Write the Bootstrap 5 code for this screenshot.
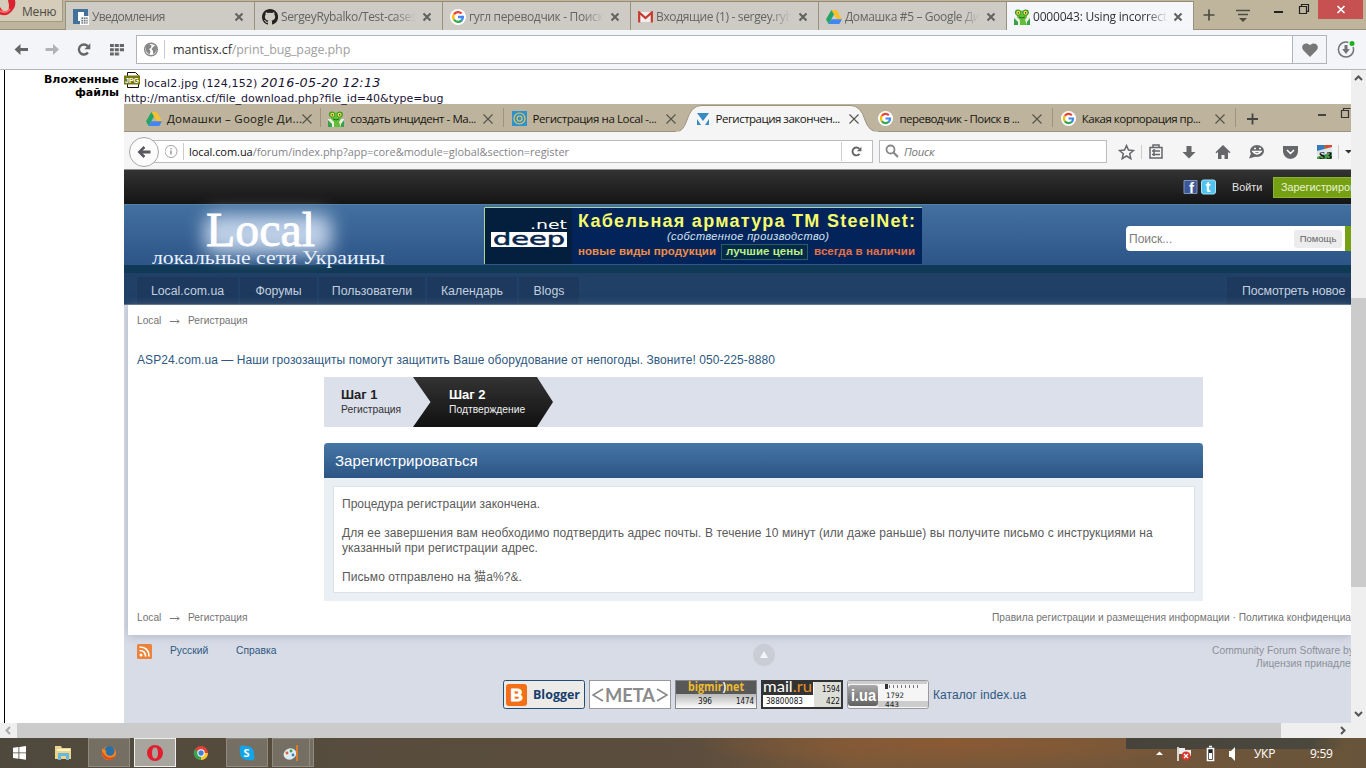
<!DOCTYPE html>
<html lang="ru">
<head>
<meta charset="utf-8">
<meta name="viewport" content="width=device-width, initial-scale=1">
<title>0000043: Using incorrect</title>
<link href="https://cdn.jsdelivr.net/npm/bootstrap@5.3.0/dist/css/bootstrap.min.css" rel="stylesheet">
<style>
body{width:1366px;height:768px;overflow:hidden;font:12px/14px "Open Sans",sans-serif;color:#333;background:#fff}
svg{display:block;flex:none}
.t{white-space:nowrap;flex:none}
.fadeout{overflow:hidden;letter-spacing:-.35px;-webkit-mask-image:linear-gradient(90deg,#000 84%,transparent);mask-image:linear-gradient(90deg,#000 84%,transparent)}
/* outer browser */
.strip{height:30px;background:#beb59c;border-bottom:1px solid #98907b}
.menu-btn{width:63px;height:22px;background:#d5cdb9;border:1px solid #a39a83;border-left:0;border-top:0;color:#4b4a46;overflow:hidden}
.otab{width:188px;height:29px;margin-top:1px;padding:1px 10px 0 7px;background:#cdcbc4;border-top:1px solid #958c76;border-left:1px solid #97917f;color:#646462}
.otab .fadeout{width:135px;margin-left:3px}
.otab.on{background:#f4f6f9;color:#303236;height:30px;border-right:1px solid #97917f}
.otab use[href="#x"]{color:#62625f}
.bar{height:40px;background:#f3f5f8;border-bottom:1px solid #b5b6b8}
.addr{width:1157px;height:29px;background:#fff;border:1px solid #b3b4b6}
.heart{width:34px;height:29px;border:1px solid #b3b4b6;border-left:0}
/* printed bug */
.view{height:653px}
.page{width:1351px;overflow:hidden}
.lbl{width:120px;margin-left:4px;border-left:1px solid #000;padding-right:5px;text-align:right;font:bold 11px/13px Verdana,"DejaVu Sans",sans-serif;color:#000;padding-top:3px}
.shot{width:1227px;overflow:hidden}
.info{height:34px;font:11px/13px Verdana,"DejaVu Sans",sans-serif;color:#1a1436}
/* inner browser */
.istrip{height:28px;background:#beb49d;color:#16150f;border-bottom:1px solid #9c937e;font-size:11.5px}
.itab{width:183px;height:27px;padding-top:2px}
.itab .t{width:132px}
.itab+.sep{width:1px;height:19px;background:#9d947f}
.ion{width:190px;height:28px;margin:0 -3px 0 -5px;position:relative;padding-top:2px}
.ibar{height:38px;background:#f5f5f6;border-bottom:1px solid #8c8d8d;padding-top:2px}
.iaddr{height:23px;background:#fff;border:1px solid #bcbcc0;margin-left:-10px;width:724px}
.isearch{width:228px;height:23px;background:#fff;border:1px solid #bcbcc0;font-style:italic;color:#777}
/* forum */
.forum{font:12px/14px Arial,"Liberation Sans","Noto Sans CJK JP",sans-serif;background:#d8dce7;height:553px}
.topb{height:34px;background:linear-gradient(#333,#141414);color:#e4e4e4;font-size:10.8px}
.reg{height:21px;width:90px;background:#76a013;border:1px solid #8bb52a;color:#e9f2d5;overflow:hidden;padding-left:7px}
.head{height:61px;background:linear-gradient(#42709f,#2d5588);border-top:1px solid #5680a8}
.srch{width:219px;height:25px;background:#fff;border-radius:4px 0 0 4px;color:#7c7c7c;padding:0 3px}
.help{background:#ececec;border-radius:3px;width:48px;height:18px;font-size:9.5px;color:#666}
.dstripe{height:8px;background:#103956}
.fnav{height:32px;background:#204066;padding:4px 0 0 13px;color:#c3cfdf;font-size:12.3px;gap:2px;border-bottom:1px solid #5d7391}
.fnav div{height:27px;background:#1d3a5e}
.white{margin-left:4px;height:330px;background:#fff;padding-left:9px;box-shadow:0 1px 9px #8c93aa90;position:relative}
.crumb{font-size:10.2px;color:#747474}
.steps{width:879px;height:50px;background:#dbe0ea;margin-left:187px}
.s1{width:89px;padding:11px 0 0 17px}
.s2{width:140px;height:50px;clip-path:polygon(0 0,88.5% 0,100% 50%,88.5% 100%,0 100%,12.5% 50%);background:linear-gradient(#333,#111);color:#eee;padding:11px 0 0 36px}
.steps b{font-size:13px;display:block;color:#222}
.s2 b{color:#fff!important}
.steps span{font-size:10.3px;display:block;line-height:15px}
.panel{width:879px;margin:16px 0 0 187px;background:#eaeff3;height:158px}
.phead{height:35px;border-radius:4px 4px 0 0;background:linear-gradient(#4676a5,#2b5585);color:#fff;font-size:15.1px;padding-left:11px}
.pbody{height:107px;margin:8px 8px 0 9px;border:1px solid #dbe3ea;background:#fff;color:#5a5a5a;padding:10px 8px;line-height:14.5px}
.lnk{color:#2e587f}
/* scrollbars and taskbar */
.vs{width:15px;background:#efefef}
.vthumb{width:15px;height:289px;background:#cbcbcb;margin-top:210px}
.hs{height:15px;background:#efefef}
.hthumb{width:1264px;height:15px;background:#cbcbcb}
.task{height:30px;color:#fff;background:linear-gradient(90deg,transparent 1126px,#45433b 1126px,#4b483e 1310px,transparent 1345px) 0 0/1366px 11px no-repeat,radial-gradient(ellipse 260px 26px at 950px 5px,#8a5a34,transparent),linear-gradient(90deg,#4f493d,#564c3d 300px,#5c4d3d 700px,#79593a 850px,#74573a 1100px,#67543a)}
.tbtn{width:42px;height:29px;border:1px solid #8e8981;background:#756e62}
</style>
</head>
<body class="d-flex flex-column">
<svg width="0" height="0" class="position-absolute">
<defs>
<symbol id="x" viewBox="0 0 10 10"><path d="M1.5 1.5l7 7m0-7l-7 7" stroke="currentColor" stroke-width="2.1" fill="none"/></symbol>
<symbol id="xt" viewBox="0 0 10 10"><path d="M.5.5l9 9m0-9l-9 9" stroke="#55524a" stroke-width="1.1" fill="none"/></symbol>
<symbol id="g" viewBox="0 0 16 16"><circle cx="8" cy="8" r="8" fill="#fff"/><g fill="none" stroke-width="2.3"><path d="M4 5.3A4.9 4.9 0 0 1 11.6 4.5" stroke="#e94335"/><path d="M4 10.7A4.9 4.9 0 0 1 4 5.3" stroke="#fbbc05"/><path d="M11.6 11.4A4.9 4.9 0 0 1 4 10.7" stroke="#34a853"/><path d="M8 8h4.9A4.9 4.9 0 0 1 11.4 11.6" stroke="#4285f4"/></g></symbol>
<symbol id="drive" viewBox="0 0 16 14"><path d="M5.4 0h5.2L16 9.3h-5.2z" fill="#fbc02d"/><path d="M5.4 0L0 9.3 2.6 14 8 4.6z" fill="#23a565"/><path d="M5.2 9.3H16L13.4 14H2.6z" fill="#4285f4"/></symbol>
<symbol id="mantis" viewBox="0 0 16 16"><path d="M0 8h16v8H0z" fill="#e8efe0"/><path d="M3 3q5-3 10 0l0 5-2 3 2 5H6l0-5-3-3z" fill="#64bf38"/><path d="M0 16V9l4 4v3M16 16V9l-3 4v3" fill="#36a04a"/><circle cx="4" cy="3.6" r="3.1" fill="#3b9a29"/><circle cx="11.800" cy="3.6" r="3.1" fill="#3b9a29"/><circle cx="4.300" cy="3.8" r="2" fill="#f2e04a"/><circle cx="11.500" cy="3.8" r="2" fill="#f2e04a"/><path d="M3.8 3.200h1.200v1.400H3.800zM11 3.200h1.200v1.400H11z" fill="#222"/><path d="M5 8q3 2 6 0" stroke="#226b15" fill="none"/></symbol>
<symbol id="reload" viewBox="0 0 14 14"><path d="M10.9 10A5 5 0 1 1 10.6 3.6" fill="none" stroke="currentColor" stroke-width="2.4"/><path d="M13.300.8v6H7.400z" fill="currentColor"/></symbol>
<linearGradient id="gr" x1="0" y1="0" x2="0" y2="1"><stop offset="0" stop-color="#fff"/><stop offset=".5" stop-color="#bbb"/><stop offset="1" stop-color="#fff"/></linearGradient>
<linearGradient id="gd" x1="0" y1="0" x2="0" y2="1"><stop offset="0" stop-color="#aaa"/><stop offset="1" stop-color="#606060"/></linearGradient>
</defs></svg>

<header class="strip d-flex flex-shrink-0">
 <div class="menu-btn d-flex flex-shrink-0"><svg width="22" height="21"><path d="M0 2V14.5Q7 17 12 11Q16.5 6 15 0H8Q11 11 5 12Q3 12 0 7z" fill="#d9232e"/><path d="M0 11q6 3 10-2" stroke="#ff686a" stroke-width="2" fill="none"/></svg><span class="t" style="padding-top:5px;letter-spacing:-.2px">Меню</span></div>
 <div class="otab d-flex align-items-center flex-shrink-0" style="margin-left:2px;width:189px"><svg width="16" height="16"><path d="M0 0h15v15H0z" fill="#43719c"/><path d="M5 3h6v4H7v5H5z" fill="#fff"/><path d="M7 7h9v9H7z" fill="#fff"/><path d="M8 8h7v7H8zM10.5 8v7m2.400-7v7M8 10.500h7M8 12.800h7" fill="#6f7782" stroke="#fff" stroke-width=".7"/></svg><span class="t fadeout" style="letter-spacing:-.6px">Уведомления</span><svg class="ms-auto" width="10" height="10"><use href="#x"/></svg></div>
 <div class="otab d-flex align-items-center flex-shrink-0"><svg width="16" height="16" viewBox="0 0 16 16"><path fill="#24221f" d="M8 0C3.580 0 0 3.580 0 8c0 3.540 2.290 6.530 5.470 7.590.4.070.55-.17.55-.38V13.700c-2 .4-2.600-.5-2.700-.9-.2-.5-.5-.9-.8-1.100-.3-.2-.7-.6 0-.6.6 0 1.100.6 1.200.8.7 1.200 1.900.9 2.300.7.1-.5.3-.9.5-1.100-1.800-.2-3.600-.9-3.600-4 0-.9.3-1.600.8-2.100-.1-.2-.4-1 .1-2.100 0 0 .7-.2 2.200.8a7.400 7.400 0 0 1 4 0c1.500-1 2.200-.8 2.200-.8.4 1.100.2 1.900.1 2.100.5.6.8 1.300.8 2.100 0 3.100-1.900 3.800-3.600 4 .3.2.5.7.5 1.500v2.200c0 .2.200.5.6.4A8 8 0 0 0 8 0z"/></svg><span class="t fadeout">SergeyRybalko/Test-cases</span><svg class="ms-auto" width="10" height="10"><use href="#x"/></svg></div>
 <div class="otab d-flex align-items-center flex-shrink-0"><svg width="16" height="16"><use href="#g"/></svg><span class="t fadeout">гугл переводчик - Поиск в</span><svg class="ms-auto" width="10" height="10"><use href="#x"/></svg></div>
 <div class="otab d-flex align-items-center flex-shrink-0"><svg width="15" height="12"><path d="M1 1h13v10H1z" fill="#eee"/><path d="M1.200 11.500V1.500L7.500 7l6.300-5.500V11.500" fill="none" stroke="#c9382c" stroke-width="2.200"/></svg><span class="t fadeout">Входящие (1) - sergey.ryba</span><svg class="ms-auto" width="10" height="10"><use href="#x"/></svg></div>
 <div class="otab d-flex align-items-center flex-shrink-0"><svg width="16" height="14"><use href="#drive"/></svg><span class="t fadeout">Домашка #5 – Google Диск</span><svg class="ms-auto" width="10" height="10"><use href="#x"/></svg></div>
 <div class="otab on d-flex align-items-center flex-shrink-0"><svg width="16" height="16"><use href="#mantis"/></svg><span class="t fadeout" style="letter-spacing:-.2px">0000043: Using incorrect d</span><svg class="ms-auto" width="10" height="10"><use href="#x"/></svg></div>
 <svg width="172" height="30"><path d="M15 9.500v11M9.500 15h11M42 10.500h14M44 14.500h10" stroke="#4e4b43" stroke-width="1.700"/><path d="M45 18h8l-4 4z" fill="#4e4b43"/><path d="M80 12h9" stroke="#222" stroke-width="2"/><path d="M105.500 6.500h7v7h-7zM107.500 6V4.500h7v7H113" stroke="#222" stroke-width="1.200" fill="none"/><path d="M124 0h45v19h-45z" fill="#c75050"/><path d="M143.500 6l7 7m0-7l-7 7" stroke="#fff" stroke-width="1.700"/></svg>
</header>

<div class="bar d-flex align-items-center flex-shrink-0">
 <svg width="136" height="39"><path d="M14.500 19.500l6-5.500v4h7.500v3h-7.500v4z" fill="#666"/><path d="M59 19.500l-6-5.500v4h-7.500v3H53v4z" fill="#b1b3b5"/><use href="#reload" x="77" y="12.500" width="14" height="14" color="#666"/><path d="M110 14h14v3h-14zM110 18.300h14v3h-14zM110 22.500h10v3h-10z" fill="#666"/><path d="M114.300 13v13M119.300 13v13" stroke="#f3f5f8"/></svg>
 <div class="addr d-flex align-items-center"><svg width="36" height="27"><circle cx="14" cy="13.500" r="6.300" fill="none" stroke="#888" stroke-width="1.500"/><path d="M9 9.500L12 8l2.500 1.500-.5 2.500-2 1 1.500 2-1 4L9 15zM16 11l3-2 1 4-2 4-2 1 0-3-1.500-2z" fill="#888"/><path d="M27.500 4v19" stroke="#ccc"/></svg><span class="t" style="font-size:12.500px;color:#a0a0a0;letter-spacing:-.1px"><span style="color:#333">mantisx.cf</span>/print_bug_page.php</span></div>
 <div class="heart d-flex align-items-center justify-content-center"><svg width="16" height="14"><path d="M8 14L1.300 7.300C-2.500 2.500 4-2 8 2.200C12-2 18.500 2.500 14.700 7.300z" fill="#777"/></svg></div>
 <svg width="39" height="39"><circle cx="19" cy="19.500" r="7.600" fill="none" stroke="#717377" stroke-width="1.500"/><path d="M17.500 15h3v4h2.300L19 24l-3.800-5h2.300z" fill="#717377"/><circle cx="25" cy="13.500" r="3.800" fill="#f3f5f8"/><circle cx="25" cy="13.500" r="2.500" fill="#16b51b"/></svg>
</div>

<main class="view d-flex flex-shrink-0">
 <div class="page d-flex">
  <div class="lbl flex-shrink-0">Вложенные<br>файлы</div>
  <div class="shot">
   <div class="info">
    <div class="d-flex" style="height:22px"><svg width="16" height="19"><path d="M3.500 2.500h8l3 3v12h-11z" fill="#fff" stroke="#111"/><path d="M0 5.500h16v9H0z" fill="#77770c"/><text x="1" y="12.500" font-size="7" font-weight="bold" font-family="Liberation Sans" fill="#fff" textLength="14">JPG</text></svg><span class="t" style="padding:7px 0 0 4px;letter-spacing:.13px">local2.jpg (124,152) <i style="font-size:12.800px;letter-spacing:.28px;line-height:11px">2016-05-20 12:13</i></span></div>
    <span class="t">http://mantisx.cf/file_download.php?file_id=40&amp;type=bug</span>
   </div>
   <div class="istrip d-flex align-items-center">
    <div class="itab d-flex align-items-center flex-shrink-0" style="width:196px;padding-left:22px"><svg width="16" height="14"><use href="#drive"/></svg><span class="t" style="margin-left:5px;width:133px;letter-spacing:.25px">Домашки – Google Ди...</span><svg class="ms-auto me-2" width="10" height="10"><use href="#xt"/></svg></div><div class="sep"></div>
    <div class="itab d-flex align-items-center flex-shrink-0" style="padding-left:8px"><svg width="16" height="16"><use href="#mantis"/></svg><span class="t" style="margin-left:6px;letter-spacing:-.45px">создать инцидент - Ма...</span><svg class="ms-auto" style="margin-right:10px" width="10" height="10"><use href="#xt"/></svg></div><div class="sep"></div>
    <div class="itab d-flex align-items-center flex-shrink-0" style="padding-left:8px"><svg width="15" height="15"><path d="M0 0h15v15H0z" fill="#2b94d0"/><g fill="none" stroke="#f1c24e" stroke-width="1.200"><circle cx="7.500" cy="7.500" r="5.500"/><circle cx="7.500" cy="7.500" r="2.500"/></g></svg><span class="t" style="margin-left:6px;width:128px;letter-spacing:-.4px">Регистрация на Local -...</span><svg class="ms-auto" style="margin-right:11px" width="10" height="10"><use href="#xt"/></svg></div>
    <div class="ion flex-shrink-0 d-flex align-items-center"><svg class="position-absolute" style="left:-6px;top:0" width="202" height="29"><path d="M0 28Q7 28 11 16Q15 2 25 1.500H175Q185 2 189 16Q193 28 202 28V29H0z" fill="#f5f5f6" stroke="#9c937e"/><path d="M0 28.500h202" stroke="#f5f5f6" stroke-width="2"/></svg><svg class="position-relative" style="margin-left:15px" width="12" height="12"><path d="M0 0h12L6 8zM0 6l4 6H0zM12 6v6H8z" fill="#388bc2"/></svg><span class="t position-relative" style="margin-left:7px;width:129px;letter-spacing:-.5px">Регистрация закончен...</span><svg class="position-relative ms-1" width="10" height="10"><use href="#xt"/></svg></div>
    <div class="itab d-flex align-items-center flex-shrink-0" style="padding-left:9px"><svg width="15" height="15"><use href="#g"/></svg><span class="t" style="margin-left:7px;width:130px;letter-spacing:-.55px">переводчик - Поиск в ...</span><svg class="ms-auto" style="margin-right:10px" width="10" height="10"><use href="#xt"/></svg></div><div class="sep"></div>
    <div class="itab d-flex align-items-center flex-shrink-0" style="padding-left:9px"><svg width="15" height="15"><use href="#g"/></svg><span class="t" style="margin-left:6px;width:125px;letter-spacing:-.5px">Какая корпорация пр...</span><svg class="ms-auto" style="margin-right:10px" width="10" height="10"><use href="#xt"/></svg></div><div class="sep"></div>
    <svg width="116" height="27"><path d="M17.500 9.500v11M12 15h11M83 11h8" stroke="#444" stroke-width="1.800"/><path d="M106.500 6.500h7v7h-7zM108.500 6V4.500h7" stroke="#333" stroke-width="1.200" fill="none"/></svg>
   </div>
   <div class="ibar d-flex align-items-center">
    <svg class="position-relative" style="margin-left:4px;margin-right:-1px;z-index:1" width="32" height="32"><circle cx="16" cy="16" r="14.500" fill="#fcfcfc" stroke="#a7a7ab"/><path d="M9.500 16l6-6 1.800 1.900-2.600 2.600H22.500v3h-7.800l2.600 2.600-1.800 1.900z" fill="#58595c"/></svg>
    <div class="iaddr d-flex align-items-center flex-shrink-0" style="padding-left:15px"><svg width="24" height="21"><circle cx="6" cy="10.500" r="6" fill="none" stroke="#a2a2a2"/><path d="M6 9.500v4M6 7v1.300" stroke="#888" stroke-width="1.300"/><path d="M18.500 2v17" stroke="#ccc"/></svg><span class="t" style="font-size:11px;color:#84848a;letter-spacing:-.05px"><span style="color:#111">local.com.ua</span>/forum/index.php?app=core&amp;module=global&amp;section=register</span><svg class="ms-auto" width="31" height="21"><path d="M.5 1v19" stroke="#ccc"/><use href="#reload" x="10" y="5" width="11" height="11" color="#666"/></svg></div>
    <div class="isearch d-flex align-items-center flex-shrink-0" style="margin-left:6px"><svg width="24" height="21"><circle cx="10.500" cy="8.500" r="4" fill="none" stroke="#888" stroke-width="1.800"/><path d="M13.500 11.500l4.500 4.500" stroke="#888" stroke-width="2.200"/></svg><span class="t" style="font-size:11.500px;letter-spacing:-.3px">Поиск</span></div>
    <svg width="244" height="36"><g fill="none" stroke="#66676b" stroke-width="1.500"><path d="M19.500 11.500l2 4.500 4.900.500-3.700 3.200 1.100 4.900-4.300-2.600-4.300 2.600 1.100-4.900-3.700-3.200 4.900-.500z"/><path d="M43 13.500h12v10.500H43zM46 13v-2h6v2M45 17h8M45 20.500h8M47 15v7"/></g><path d="M34.500 11v14" stroke="#ccc"/><g fill="#66676b"><path d="M79.500 12h5v6h4L82 24.500l-6.500-6.500h4z"/><path d="M116 11l-7.500 7.200 1 1 1.500-1.300v7h3.500v-4h3v4h3.500v-7l1.500 1.300 1-1z"/><ellipse cx="150" cy="17" rx="7" ry="6"/><path d="M144 19.500l-2 5 7-2z"/><path d="M176 12h15v6q-1 6-7.500 7-6.500-1-7.500-7z"/></g><path d="M146 17.500q4 5 8 0zM147 14.500h2m3 0h2M180 16l3.500 3.500 3.500-3.500" fill="none" stroke="#fff" stroke-width="1.500"/><path d="M210 11h15v14h-15z" fill="#4b9c4e"/><path d="M218 11h7v5h-7z" fill="#db4935"/><path d="M210 11h7v7h-7z" fill="#3878bd"/><path d="M210 17l15-4v5l-15 5z" fill="#dce6ec"/><text x="212" y="25" font-size="11" font-weight="bold" font-family="Liberation Serif" fill="#111" textLength="13">S3</text><path d="M231.500 11v14" stroke="#ccc"/><path d="M238 16h7l-3.500 3.500z" fill="#333"/></svg>
   </div>

   <div class="forum">
    <div class="topb d-flex align-items-center">
     <svg style="margin-left:1059px" width="34" height="16"><path d="M1 1.500h13v13H1z" fill="#3b5798" stroke="#8193bd"/><text x="6" y="14" font-size="15" font-weight="bold" font-family="Liberation Sans" fill="#fff">f</text><rect x="18.500" y="1" width="14" height="14" rx="2" fill="#50c4ee" stroke="#a6e2f7"/><text x="22.500" y="13" font-size="15" font-weight="bold" font-family="Liberation Sans" fill="#fff">t</text></svg>
     <span class="t" style="margin-left:15px;width:41px">Войти</span><div class="reg d-flex align-items-center flex-shrink-0"><span class="t">Зарегистрироваться</span></div>
    </div>
    <div class="head d-flex">
     <svg style="overflow:visible;position:relative" width="360" height="60"><defs><filter id="b" x="-50%" y="-50%" width="200%" height="200%"><feGaussianBlur stdDeviation="9"/></filter></defs><rect x="80" y="9" width="128" height="40" rx="12" fill="#d4e2f5" opacity=".85" filter="url(#b)"/><text x="82" y="41" font-size="48" font-family="Liberation Serif" fill="#fff" stroke="#fff" stroke-width=".8" textLength="109" lengthAdjust="spacingAndGlyphs">Local</text><text x="28" y="59" font-size="19.500" font-family="Liberation Serif" fill="#e8f1fc" textLength="233" lengthAdjust="spacingAndGlyphs">локальные сети Украины</text></svg>
     <svg style="margin-top:2px" width="438" height="57"><rect width="438" height="57" fill="#03245a"/><path d="M0 0h88v57H0z" fill="#031f3d"/><path d="M.5 57V.5H438" stroke="#a9d793" fill="none"/><path d="M7 25h76v15H7z" fill="#fff"/><text x="9" y="37.500" font-size="17" font-family="DejaVu Sans" fill="#06254b" stroke="#06254b" stroke-width=".5" textLength="72" lengthAdjust="spacingAndGlyphs">deep</text><text x="46" y="22" font-size="13" font-family="DejaVu Sans" fill="#fff" textLength="37" lengthAdjust="spacingAndGlyphs">.net</text><text x="94" y="20" textLength="337" font-size="18" font-weight="bold" font-family="Liberation Sans" fill="#f6fc6b">Кабельная арматура ТМ SteelNet:</text><text x="183" y="33" textLength="162" font-size="11" font-style="italic" font-family="Liberation Sans" fill="#d5e4f3">(собственное производство)</text><g font-size="11.500" font-weight="bold" font-family="Liberation Sans"><text x="94" y="48" textLength="138" fill="#ef8d48">новые виды продукции</text><rect x="237.500" y="37.500" width="86" height="15" fill="#06294a" stroke="#28605f"/><text x="242" y="48" textLength="77" fill="#b8f184">лучшие цены</text><text x="330" y="48" textLength="101" fill="#e57147">всегда в наличии</text></g></svg>
     <div class="srch d-flex align-items-center flex-shrink-0" style="margin:21px 0 0 204px"><span class="t">Поиск...</span><span class="help d-flex align-items-center justify-content-center ms-auto">Помощь</span></div><div style="margin-top:21px;width:8px;height:25px;background:#76a013"></div>
    </div>
    <div class="dstripe"></div>
    <nav class="fnav d-flex">
     <div class="d-flex align-items-center justify-content-center" style="width:101px">Local.com.ua</div><div class="d-flex align-items-center justify-content-center" style="width:77px">Форумы</div><div class="d-flex align-items-center justify-content-center" style="width:106px">Пользователи</div><div class="d-flex align-items-center justify-content-center" style="width:90px">Календарь</div><div class="d-flex align-items-center justify-content-center" style="width:60px">Blogs</div><div class="d-flex align-items-center ms-auto t" style="width:124px;padding-left:15px;letter-spacing:-.1px">Посмотреть новое</div>
    </nav>
    <div class="white">
     <div class="crumb d-flex" style="padding-top:9px;height:48px"><span class="t" style="width:33px">Local</span><svg width="18" height="14"><path d="M0 7.500h9M7 5.500l2 2-2 2" stroke="#777" fill="none"/></svg><span class="t">Регистрация</span></div>
     <div class="t lnk" style="height:24px;letter-spacing:.07px">ASP24.com.ua — Наши грозозащиты помогут защитить Ваше оборудование от непогоды. Звоните! 050-225-8880</div>
     <div class="steps d-flex"><div class="s1"><b>Шаг 1</b><span>Регистрация</span></div><div class="s2"><b>Шаг 2</b><span>Подтверждение</span></div></div>
     <div class="panel"><div class="phead d-flex align-items-center">Зарегистрироваться</div>
      <div class="pbody d-flex flex-column"><span class="t">Процедура регистрации закончена.</span><span class="t" style="margin-top:14.500px;letter-spacing:.087px">Для ее завершения вам необходимо подтвердить адрес почты. В течение 10 минут (или даже раньше) вы получите письмо с инструкциями на</span><span class="t" style="letter-spacing:.04px">указанный при регистрации адрес.</span><span class="t" style="margin-top:14.500px;letter-spacing:.07px;line-height:14px">Письмо отправлено на 猫a%?&amp;.</span></div></div>
     <div class="crumb d-flex" style="padding-top:10px"><span class="t" style="width:33px">Local</span><svg width="18" height="14"><path d="M0 7.500h9M7 5.500l2 2-2 2" stroke="#777" fill="none"/></svg><span class="t" style="width:804px">Регистрация</span><span class="t">Правила регистрации и размещения информации · Политика конфиденциальности</span></div>
    </div>
    <div class="d-flex" style="padding:9px 0 0 13px;font-size:11px;height:45px">
     <svg width="15" height="15"><rect width="15" height="15" rx="1.500" fill="#ec8338"/><circle cx="4" cy="11" r="1.500" fill="#fff"/><path d="M2.500 6.500Q8.500 6.500 8.500 12.500M2.500 3Q12 3 12 12.500" stroke="#fff" stroke-width="1.700" fill="none"/></svg>
     <span class="t lnk" style="margin-left:18px;width:66px;font-size:10.300px">Русский</span><span class="t lnk" style="width:516px;font-size:10.300px">Справка</span>
     <svg width="24" height="24"><circle cx="12" cy="11" r="11" fill="#cbcdd6"/><path d="M12 7l4 7H8z" fill="#f4f5f8"/></svg>
     <div class="t" style="width:190px;margin-left:436px;color:#8d9098;line-height:13px;font-size:10.300px"><div>Community Forum Software by</div><div style="padding-left:44px">Лицензия принадлежит</div></div>
    </div>
    <div class="d-flex align-items-center" style="padding-left:379px;gap:4px">
     <svg width="82" height="29"><rect x=".5" y=".5" width="81" height="28" rx="2" fill="#ecebe8" stroke="#234e74"/><rect x="3" y="4" width="21" height="22" rx="3" fill="#f36f17"/><text x="7.500" y="21" font-size="17" font-weight="bold" font-family="Liberation Sans" fill="#fff" stroke="#fff" stroke-width="1">B</text><text x="30" y="19" font-size="13" font-weight="bold" font-family="Open Sans" fill="#173e6c" textLength="47" lengthAdjust="spacingAndGlyphs">Blogger</text></svg>
     <svg width="82" height="29"><rect x=".5" y=".5" width="81" height="28" fill="#fff" stroke="#999"/><path d="M14 9L4 15l10 6M68 9l10 6-10 6" fill="none" stroke="#888" stroke-width="1.500"/><text x="16" y="22" font-size="19" font-weight="bold" font-family="Lato" fill="#8b8b8b" textLength="50" lengthAdjust="spacingAndGlyphs">META</text></svg>
     <svg width="82" height="29"><rect x=".5" y=".5" width="81" height="28" fill="url(#gr)" stroke="#888"/><path d="M1 1h80v13H1z" fill="#585858"/><text x="13" y="10.500" font-size="12" font-weight="bold" font-family="Open Sans" fill="#eebc31" textLength="56" lengthAdjust="spacingAndGlyphs">bigmir<tspan fill="#fff">)</tspan>net</text><g font-size="8.500" font-family="DejaVu Sans" fill="#111"><text x="23" y="23.500" textLength="14" lengthAdjust="spacingAndGlyphs">396</text><text x="61" y="23.500" textLength="18" lengthAdjust="spacingAndGlyphs">1474</text></g></svg>
     <svg width="82" height="29"><rect x="1" y="1" width="80" height="27" fill="#fff" stroke="#333" stroke-width="2"/><path d="M2 2h50v13H2z" fill="#333"/><path d="M53 2h27v25H53z" fill="#deded8"/><text x="2" y="12" font-size="16" font-family="Lato" fill="#fff" textLength="49" lengthAdjust="spacingAndGlyphs">mail<tspan fill="#e89127">.ru</tspan></text><g font-size="8.500" font-family="DejaVu Sans" fill="#111"><text x="61" y="12" textLength="18" lengthAdjust="spacingAndGlyphs">1594</text><text x="65" y="23.500" textLength="14" lengthAdjust="spacingAndGlyphs">422</text><text x="5" y="24" textLength="37" lengthAdjust="spacingAndGlyphs">38800083</text></g></svg>
     <svg width="82" height="29"><rect x=".5" y=".5" width="81" height="28" rx="2" fill="#f5f5f5" stroke="#999"/><path d="M1 1h79v3H1zM31 21h50v6H31z" fill="#ccc"/><rect x="1" y="5" width="30" height="21" rx="3" fill="url(#gd)"/><text x="4" y="20.500" font-size="17" font-weight="bold" font-family="Liberation Sans" fill="#fff" textLength="25" lengthAdjust="spacingAndGlyphs">i.ua</text><path d="M38 6.500h35" stroke="#777" stroke-width="3" stroke-dasharray="1 3"/><path d="M38 4h3v5h-3z" fill="#333"/><g font-size="7.500" font-family="DejaVu Sans" fill="#222"><text x="39" y="17.500" textLength="18" lengthAdjust="spacingAndGlyphs">1792</text><text x="38" y="27" textLength="14" lengthAdjust="spacingAndGlyphs">443</text></g></svg>
     <span class="t lnk" style="letter-spacing:.05px">Каталог index.ua</span>
    </div>
   </div>
  </div>
 </div>
 <div class="vs d-flex flex-column flex-shrink-0"><svg width="15" height="18"><path d="M4 10l3.500-3.500L11 10" fill="none" stroke="#555" stroke-width="2"/></svg><div class="vthumb"></div><svg class="mt-auto" width="15" height="18"><path d="M4 7l3.500 3.500L11 7" fill="none" stroke="#555" stroke-width="2"/></svg></div>
</main>
<div class="hs d-flex flex-shrink-0"><svg width="17" height="15"><path d="M10 4L6.500 7.500 10 11" fill="none" stroke="#aaa" stroke-width="2"/></svg><div class="hthumb"></div><svg width="85" height="15"><path d="M60 4l3.500 3.500L60 11" fill="none" stroke="#555" stroke-width="2"/></svg></div>
<footer class="task d-flex flex-shrink-0">
 <svg width="88" height="30"><path d="M13 9.800l5.500-.8V14.500H13zM19.300 8.900L26 8v6.500h-6.700zM13 15.300h5.500v5.500l-5.500-.8zM19.300 15.300H26v6.500l-6.700-1z" fill="#fff"/><path d="M55 8h6l1 2h9v11H55z" fill="#ecd58b"/><path d="M57 11h13v2H57z" fill="#fff3c8"/><path d="M58 15h11v7h-3v-4h-5v4h-3z" fill="#69b7dc"/></svg>
 <div class="tbtn d-flex align-items-center justify-content-center flex-shrink-0"><svg width="16" height="16"><circle cx="8" cy="8" r="7" fill="#ee7920"/><circle cx="8.500" cy="6" r="5" fill="#2970a7"/><path d="M1 3q1 3 4 2-1 6 5 6 3 0 5-6 0 9-7 10-7-1-7-8z" fill="#f28a24"/><path d="M1 6q0 8 7 9 4 0 6-4-4 3-8 1-3-2-5-6z" fill="#d8491c"/></svg></div>
 <div class="tbtn d-flex align-items-center justify-content-center flex-shrink-0" style="margin-left:4px;background:#a8a59f;border-color:#eee"><svg width="16" height="16"><path fill-rule="evenodd" d="M8 0a8 8 0 1 0 0 16A8 8 0 0 0 8 0zm0 2.500c2 0 3 2 3 5.500s-1 5.500-3 5.500-3-2-3-5.500 1-5.500 3-5.500z" fill="#df1f2e"/></svg></div>
 <svg width="49" height="30"><circle cx="25" cy="15" r="7" fill="#e24336"/><path d="M25 15l-6.300-3.500A7 7 0 0 0 25 22z" fill="#35a350"/><path d="M25 15h7a7 7 0 0 1-7 7z" fill="#f6ca30"/><circle cx="25" cy="15" r="3.700" fill="#fff"/><circle cx="25" cy="15" r="2.700" fill="#4280d8"/></svg>
 <div class="tbtn d-flex align-items-center justify-content-center flex-shrink-0" style="margin-left:1px"><svg width="16" height="16"><circle cx="8" cy="8" r="7" fill="#12a5e9"/><circle cx="4" cy="4" r="3.500" fill="#12a5e9"/><circle cx="12" cy="12" r="3.500" fill="#12a5e9"/><text x="4.500" y="12" font-size="11" font-weight="bold" font-family="Open Sans" fill="#fff">S</text></svg></div>
 <div class="tbtn d-flex align-items-center justify-content-center flex-shrink-0" style="margin-left:4px;width:38px"><svg width="16" height="16"><ellipse cx="7" cy="9" rx="6.500" ry="5.500" fill="#dceaf1" transform="rotate(-20 7 9)"/><circle cx="4" cy="8" r="1.400" fill="#da5e36"/><circle cx="8" cy="6" r="1.400" fill="#3d9f44"/><circle cx="10" cy="10" r="1.400" fill="#347fc1"/><path d="M14 0v16" stroke="#d47d2f" stroke-width="2"/></svg></div><div class="tbtn flex-shrink-0" style="width:4px;border-left:0"></div>
 <svg class="ms-auto" width="96" height="30"><path d="M1 17l3.500-3.500L8 17z" fill="#fff"/><path d="M23 9v14" stroke="#fff" stroke-width="1.500"/><path d="M24 10h6v2h6v6h-6v-2h-6z" fill="#eee"/><circle cx="31" cy="18" r="4.500" fill="#d8392c"/><path d="M29 16l4 4m0-4l-4 4" stroke="#fff" stroke-width="1.300"/><path d="M52.500 10.500h6v12h-6zM54 8.500h3" stroke="#fff" stroke-width="1.600" fill="#222"/><path d="M54 15h3v6h-3z" fill="#fff"/><path d="M74 13h2l4-4v14l-4-4h-2z" fill="#fff"/></svg>
 <span class="t" style="margin:9px 0 0 3px;width:56px;letter-spacing:-.3px">УКР</span><span class="t" style="margin-top:9px;width:56px;letter-spacing:-.3px">9:59</span>
</footer>
<script src="https://cdn.jsdelivr.net/npm/bootstrap@5.3.0/dist/js/bootstrap.bundle.min.js"></script>
</body>
</html>
